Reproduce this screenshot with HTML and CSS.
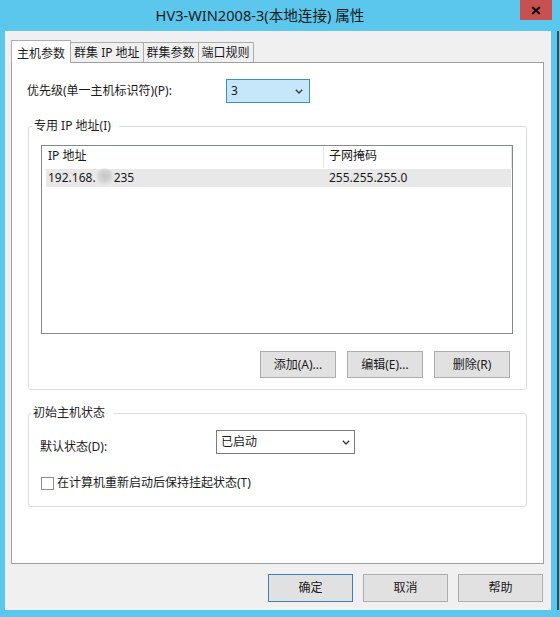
FILE: index.html
```html
<!DOCTYPE html>
<html lang="zh-CN">
<head>
<meta charset="utf-8">
<title>HV3-WIN2008-3(本地连接) 属性</title>
<link rel="stylesheet" href="styles.css">
</head>
<body>
<div class="window">
  <div class="titlebar">
    <div class="title">HV3-WIN2008-3(本地连接) 属性</div>
    <div class="close">
      <svg width="10" height="9" viewBox="0 0 10 9"><path d="M1.2 1 L8.8 8 M8.8 1 L1.2 8" stroke="#111" stroke-width="2.2" fill="none"/></svg>
    </div>
  </div>
  <div class="client">
    <div class="tabs">
      <div class="tab active">主机参数</div>
      <div class="tab">群集 IP 地址</div>
      <div class="tab">群集参数</div>
      <div class="tab">端口规则</div>
    </div>
    <div class="panel">
      <div class="row priority">
        <span class="lbl lbl-priority">优先级(单一主机标识符)(P):</span>
        <div class="combo combo-focus">
          <span>3</span>
          <svg class="chev" width="8" height="5" viewBox="0 0 8 5"><path d="M0.8 0.8 L4 4 L7.2 0.8" stroke="#3a3a3a" stroke-width="1.4" fill="none"/></svg>
        </div>
      </div>
      <fieldset class="group group-ip">
        <legend>专用 IP 地址(I)</legend>
        <div class="listview">
          <div class="lv-header">
            <div class="col1">IP 地址</div>
            <div class="col2">子网掩码</div>
          </div>
          <div class="lv-row">
            <div class="col1">192.168.<span class="blur"></span>235</div>
            <div class="col2">255.255.255.0</div>
          </div>
        </div>
        <div class="btnrow">
          <button class="btn btn-sm">添加(A)...</button>
          <button class="btn btn-sm">编辑(E)...</button>
          <button class="btn btn-sm">删除(R)</button>
        </div>
      </fieldset>
      <fieldset class="group group-state">
        <legend>初始主机状态</legend>
        <div class="row state">
          <span class="lbl lbl-state">默认状态(D):</span>
          <div class="combo combo-plain">
            <span>已启动</span>
            <svg class="chev" width="8" height="5" viewBox="0 0 8 5"><path d="M0.8 0.8 L4 4 L7.2 0.8" stroke="#3a3a3a" stroke-width="1.4" fill="none"/></svg>
          </div>
        </div>
        <div class="check">
          <span class="box"></span>
          <span>在计算机重新启动后保持挂起状态(T)</span>
        </div>
      </fieldset>
    </div>
    <div class="dlg-buttons">
      <button class="btn btn-lg btn-default">确定</button>
      <button class="btn btn-lg">取消</button>
      <button class="btn btn-lg">帮助</button>
    </div>
  </div>
</div>
</body>
</html>
```
FILE: styles.css
```css
* { box-sizing: border-box; }
html, body { margin: 0; padding: 0; }
body {
  width: 560px;
  height: 617px;
  overflow: hidden;
  background: #5cc7ec;
  font-family: "Noto Sans", "Noto Sans CJK SC", sans-serif;
  font-size: 12px;
  color: #1a1a1a;
}
.window {
  width: 560px;
  height: 617px;
  background: #5cc7ec;
  display: flex;
  flex-direction: column;
}
.titlebar {
  height: 31px;
  display: flex;
  align-items: flex-start;
  padding-right: 8px;
}
.title {
  flex: 1;
  text-align: center;
  font-size: 14.6px;
  line-height: 30px;
  color: #1a1a1a;
}
.close {
  width: 32px;
  height: 20px;
  background: #c75050;
  display: flex;
  align-items: center;
  justify-content: center;
}
.client {
  flex: 1;
  margin: 0 9px 7px 5px;
  background: #f0f0f0;
  padding: 9px 7px 8px 6px;
  display: flex;
  flex-direction: column;
  box-shadow: 6px 0 0 #5cc7ec, 8px 0 0 #3b4950;
}
.tabs {
  display: flex;
  align-items: flex-end;
  height: 22px;
  position: relative;
  z-index: 1;
}
.tab {
  height: 20px;
  padding: 2px 3px 0;
  line-height: 16px;
  border: 1px solid #acacac;
  border-bottom: none;
  background: #f0f0f0;
  margin-left: -1px;
  white-space: nowrap;
}
.tab.active {
  height: 23px;
  margin-left: 0;
  margin-bottom: -1px;
  padding: 5px 5px 0;
  background: #fff;
  position: relative;
  z-index: 2;
}
.panel {
  flex: 1;
  background: #fff;
  border: 1px solid #a0a0a0;
  padding: 0 16px;
}
.row { display: flex; }
.priority { margin-top: 16px; align-items: center; }
.lbl { line-height: 16px; white-space: nowrap; }
.lbl-priority { width: 199px; margin-left: -1px; }
.combo {
  height: 24px;
  border: 1px solid #7a7a7a;
  display: flex;
  align-items: center;
  justify-content: space-between;
  padding: 0 5px 0 4px;
  line-height: 16px;
}
.combo-focus {
  width: 84px;
  background: #c6e7f9;
  border-color: #3d8ec9;
  padding-right: 6px;
}
.combo-plain {
  width: 139px;
  background: #fff;
  padding-right: 4px;
}
.group {
  margin: 15px 0 0;
  border: 1px solid #d9dde0;
  border-radius: 3px;
  min-width: 0;
}
.group legend {
  line-height: 16px;
  padding: 0 8px 0 2px;
  margin-left: -9px;
  color: #1e1e1e;
}
.group-ip { padding: 11px 13px 11px 12px; }
.listview {
  height: 189px;
  border: 1px solid #828790;
  background: #fff;
}
.lv-header {
  display: flex;
  height: 22px;
  line-height: 20px;
}
.lv-header .col1 {
  width: 282px;
  padding-left: 6px;
  border-right: 1px solid #e5e5e5;
}
.lv-header .col2 {
  width: 188px;
  padding-left: 5px;
  border-right: 1px solid #e5e5e5;
}
.lv-row {
  display: flex;
  height: 18px;
  line-height: 18px;
  margin: 1px 1px 0 4px;
  background: #e8e8e8;
}
.lv-row .col1 {
  width: 279px;
  padding-left: 2px;
  display: flex;
  align-items: center;
}
.lv-row .col2 { padding-left: 4px; }
.blur {
  display: inline-block;
  width: 18px;
  height: 18px;
  margin-top: -3px;
  border-radius: 50%;
  background: radial-gradient(circle at 50% 45%, #c6c6c6 0%, #d0d0d0 35%, rgba(232,232,232,0) 72%);
}
.btnrow {
  display: flex;
  justify-content: flex-end;
  gap: 11px;
  margin-top: 17px;
  padding-right: 3px;
}
.btn {
  font: inherit;
  color: #1a1a1a;
  background: #e1e1e1;
  border: 1px solid #adadad;
  padding: 0;
  margin: 0;
  text-align: center;
  line-height: 16px;
  border-radius: 0;
}
.btn-sm { width: 76px; height: 27px; }
.btn-lg { width: 85px; height: 28px; }
.btn-default { border-color: #3c7fb1; }
.group-state { padding: 9px 12px 15px 11px; }
.state { align-items: flex-start; }
.lbl-state { width: 176px; padding-top: 9px; }
.check {
  display: flex;
  align-items: center;
  gap: 3px;
  height: 16px;
  margin-top: 20px;
  margin-left: 1px;
  line-height: 16px;
}
.check .box {
  width: 13px;
  height: 13px;
  border: 1px solid #8d8d8d;
  background: #fff;
}
.dlg-buttons {
  display: flex;
  justify-content: flex-end;
  gap: 10px;
  margin-top: 10px;
  padding-right: 1px;
}
```
